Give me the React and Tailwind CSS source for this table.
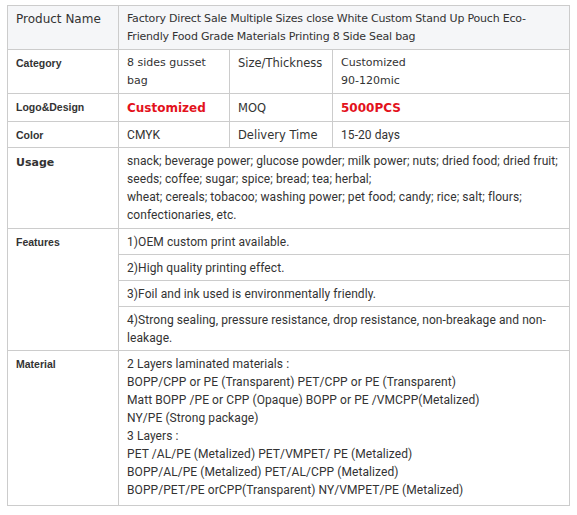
const tahoma = "font-['DejaVu_Sans',sans-serif]";
const roboto = "font-['Roboto',sans-serif] tracking-[0.08px]";

const cell = "border border-[#cccccc] pl-[8px] pr-[8px] pt-[4px] pb-[3px] align-top leading-[18px]";
const label = `${cell} pl-[7px] font-['Liberation_Sans',sans-serif] text-[10.5px] font-bold text-[#333]`;

const usage = [
  "snack; beverage power; glucose powder; milk power; nuts; dried food; dried fruit;",
  "seeds; coffee; sugar; spice; bread; tea; herbal;",
  "wheat; cereals; tobacoo; washing power; pet food; candy; rice; salt; flours;",
  "confectionaries, etc.",
];

const features = [
  "1)OEM custom print available.",
  "2)High quality printing effect.",
  "3)Foil and ink used is environmentally friendly.",
  "4)Strong sealing, pressure resistance, drop resistance, non-breakage and non-leakage.",
];

const materials = [
  "2 Layers laminated materials :",
  "BOPP/CPP or PE (Transparent) PET/CPP or PE (Transparent)",
  "Matt BOPP /PE or CPP (Opaque) BOPP or PE /VMCPP(Metalized)",
  "NY/PE (Strong package)",
  "3 Layers :",
  "PET /AL/PE (Metalized) PET/VMPET/ PE (Metalized)",
  "BOPP/AL/PE (Metalized) PET/AL/CPP (Metalized)",
  "BOPP/PET/PE orCPP(Transparent) NY/VMPET/PE (Metalized)",
];

export default function App() {
  return (
    <div className="w-[577px] h-[515px] bg-white pt-[5px] pl-[7px] text-[#333]">
      <table className="table-fixed border-collapse w-[562px]">
        <colgroup>
          <col className="w-[111px]" />
          <col className="w-[111px]" />
          <col className="w-[103px]" />
          <col className="w-[237px]" />
        </colgroup>
        <tbody>
          {/* Header */}
          <tr className="bg-[#f5f6f8]">
            <td className={`${cell} pl-[7px] ${tahoma} text-[12px] align-middle`}>
              Product Name
            </td>
            <td colSpan={3} className={`${cell} ${tahoma} text-[11px] tracking-[-0.2px]`}>
              Factory Direct Sale Multiple Sizes close White Custom Stand Up Pouch Eco-Friendly Food Grade Materials Printing 8 Side Seal bag
            </td>
          </tr>

          <tr>
            <td className={label}>Category</td>
            <td className={`${cell} ${tahoma} text-[11px]`}>8 sides gusset bag</td>
            <td className={`${cell} ${tahoma} text-[11.5px]`}>Size/Thickness</td>
            <td className={`${cell} ${tahoma} text-[11px]`}>
              Customized
              <br />
              90-120mic
            </td>
          </tr>

          <tr>
            <td className={label}>Logo&amp;Design</td>
            <td className={`${cell} ${tahoma} text-[12px] font-bold text-[#e3121c] leading-[20px]`}>
              Customized
            </td>
            <td className={`${cell} ${tahoma} text-[11.5px] leading-[20px]`}>MOQ</td>
            <td className={`${cell} ${tahoma} text-[12px] font-bold text-[#e3121c] leading-[20px]`}>
              5000PCS
            </td>
          </tr>

          <tr>
            <td className={label}>Color</td>
            <td className={`${cell} ${roboto} text-[12px]`}>CMYK</td>
            <td className={`${cell} ${tahoma} text-[11.5px]`}>Delivery Time</td>
            <td className={`${cell} ${roboto} text-[12px]`}>15-20 days</td>
          </tr>

          <tr>
            <td className={`${cell} pl-[7px] ${tahoma} text-[11px] font-bold pt-[6px]`}>Usage</td>
            <td colSpan={3} className={`${cell} ${roboto} text-[12px] pb-[4px]`}>
              {usage.map((line) => (
                <div key={line}>{line}</div>
              ))}
            </td>
          </tr>

          {features.map((f, i) => (
            <tr key={f}>
              {i === 0 && (
                <td rowSpan={4} className={label}>
                  Features
                </td>
              )}
              <td colSpan={3} className={`${cell} ${roboto} text-[12px]`}>
                {f}
              </td>
            </tr>
          ))}

          <tr>
            <td className={label}>Material</td>
            <td colSpan={3} className={`${cell} ${roboto} text-[12px] pb-[6px]`}>
              {materials.map((line) => (
                <div key={line}>{line}</div>
              ))}
            </td>
          </tr>
        </tbody>
      </table>
    </div>
  );
}
